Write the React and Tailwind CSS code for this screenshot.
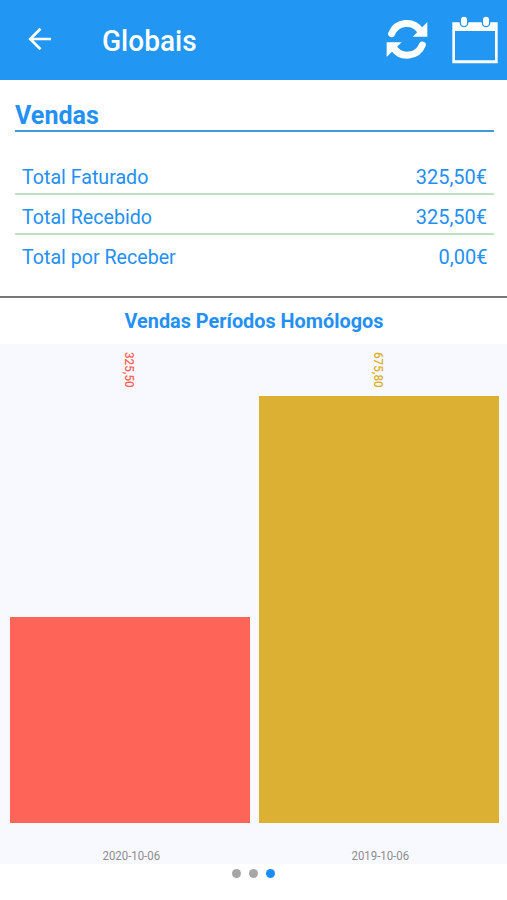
import { clsx } from 'clsx'

const totals = [
  { label: 'Total Faturado', value: '325,50€' },
  { label: 'Total Recebido', value: '325,50€' },
  { label: 'Total por Receber', value: '0,00€' },
]

const periods = [
  { date: '2020-10-06', amount: 325.5, label: '325,50', bar: 'bg-[#ff6459]', text: 'text-[#ff6459]' },
  { date: '2019-10-06', amount: 675.8, label: '675,80', bar: 'bg-[#dbb033]', text: 'text-[#dbb033]' },
]

const maxAmount = Math.max(...periods.map(p => p.amount))

function BackIcon() {
  return (
    <svg viewBox="0 0 24 24" className="w-6 h-6" fill="none" stroke="white" strokeWidth="2.7">
      <path d="M23 12H2.5M12.5 1.8L2.2 12l10.3 10.2" />
    </svg>
  )
}

function RefreshIcon() {
  return (
    <svg viewBox="0 0 126 126" className="w-[42px] h-[42px]">
      <g fill="none" stroke="white" strokeWidth="21" strokeLinecap="round">
        <path d="M17 47A49 49 0 0 1 103 38" />
        <path d="M109 81A49 49 0 0 1 23 90" />
      </g>
      <path fill="white" d="M124 12v44H80zM2 117V73h45z" />
    </svg>
  )
}

function CalendarIcon() {
  return (
    <svg viewBox="0 0 138 144" className="w-[46px] h-12">
      <path fill="white" fillRule="evenodd" d="M1 19h136v123H1zM9 45v88h120V45z" />
      <g fill="white" stroke="#2296f3" strokeWidth="4">
        <rect x="25" y="0" width="22" height="32" rx="11" />
        <rect x="91" y="0" width="22" height="32" rx="11" />
      </g>
    </svg>
  )
}

function Header() {
  return (
    <header className="flex items-center h-20 pl-7 pr-[9px] bg-[#2296f3]">
      <button aria-label="Voltar" className="pb-0.5"><BackIcon /></button>
      <h1 className="ml-[50px] pt-0.5 text-[30px] leading-none font-medium text-white">
        <span className="inline-block origin-left scale-x-[0.935]">Globais</span>
      </h1>
      <div className="flex items-center ml-auto gap-6">
        <button aria-label="Atualizar" className="pb-0.5"><RefreshIcon /></button>
        <button aria-label="Calendário"><CalendarIcon /></button>
      </div>
    </header>
  )
}

function Summary() {
  return (
    <section className="h-[216px] pl-[15px] pr-[13px] pt-5">
      <h2 className="h-8 border-b-2 border-[#3f9ae0] text-[26px] leading-[30px] font-bold">
        <span className="inline-block origin-left scale-x-[0.965]">Vendas</span>
      </h2>
      <dl className="mt-[23px] text-[21px]">
        {totals.map((row, i) => (
          <div
            key={row.label}
            className={clsx(
              'flex items-center justify-between h-10 px-[7px] pt-[7px] border-b-2',
              i < totals.length - 1 ? 'border-[#c0dfc2]' : 'border-transparent'
            )}
          >
            <dt className="origin-left scale-x-[0.935]">{row.label}</dt>
            <dd className="origin-right scale-x-[0.95]">{row.value}</dd>
          </div>
        ))}
      </dl>
    </section>
  )
}

function Chart() {
  return (
    <div className="flex h-[520px] gap-[9px] pl-[10px] pr-2 bg-[#f8f9fe]">
      {periods.map(p => (
        <div key={p.date} className="flex flex-col flex-1 items-center">
          <div className={clsx('h-[52px] pt-2 pr-[3px] text-[12px] leading-[14px] font-medium [writing-mode:vertical-rl]', p.text)}>
            <span className="inline-block origin-top scale-y-[0.97]">{p.label}</span>
          </div>
          <div className="flex items-end w-full h-[427px]">
            <div className={clsx('w-full', p.bar)} style={{ height: `${(p.amount / maxAmount) * 100}%` }} />
          </div>
          <span className="mt-[25px] ml-0.5 text-[12px] leading-4 text-[#8c8c8f] scale-x-[0.95]">{p.date}</span>
        </div>
      ))}
    </div>
  )
}

function Pager() {
  return (
    <div className="flex justify-center gap-2 pt-[5px]">
      <span className="w-[9px] h-[9px] rounded-full bg-[#a6a6a6]" />
      <span className="w-[9px] h-[9px] rounded-full bg-[#a6a6a6]" />
      <span className="w-[9px] h-[9px] rounded-full bg-[#1a8cf8]" />
    </div>
  )
}

export default function App() {
  return (
    <div className="w-[507px] h-[900px] overflow-hidden bg-white font-[Roboto,sans-serif] text-[#2490f5]">
      <Header />
      <Summary />
      <section className="border-t-2 border-[#77777a]">
        <h2 className="h-[46px] text-center text-[21px] leading-[47px] font-bold">
          <span className="inline-block scale-x-[0.945]">Vendas Períodos Homólogos</span>
        </h2>
        <Chart />
      </section>
      <Pager />
    </div>
  )
}
